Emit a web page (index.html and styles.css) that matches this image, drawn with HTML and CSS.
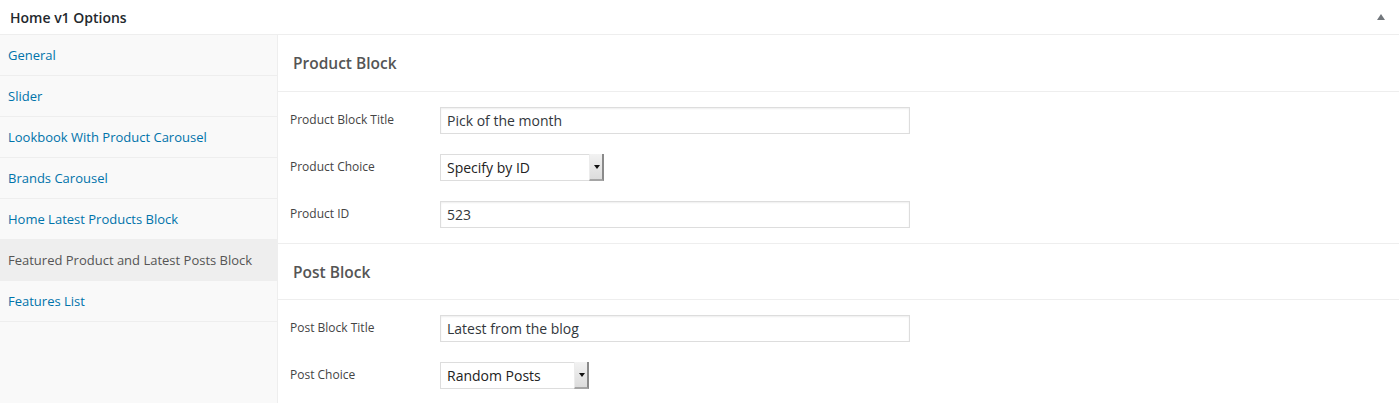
FILE: index.html
```html
<!DOCTYPE html>
<html>
<head>
<meta charset="utf-8">
<link rel="stylesheet" href="styles.css">
</head>
<body>
<div class="box">
  <div class="box-head">
    <h2 class="box-title">Home v1 Options</h2>
    <span class="toggle"></span>
  </div>
  <div class="box-body">
    <ul class="tabs">
      <li class="tab"><a href="#">General</a></li>
      <li class="tab"><a href="#">Slider</a></li>
      <li class="tab"><a href="#">Lookbook With Product Carousel</a></li>
      <li class="tab"><a href="#">Brands Carousel</a></li>
      <li class="tab"><a href="#">Home Latest Products Block</a></li>
      <li class="tab active"><a href="#">Featured Product and Latest Posts Block</a></li>
      <li class="tab"><a href="#">Features List</a></li>
    </ul>
    <div class="panel">
      <section class="group">
        <h3 class="group-title">Product Block</h3>
        <div class="fields">
          <div class="field">
            <label class="field-label">Product Block Title</label>
            <div class="input">Pick of the month</div>
          </div>
          <div class="field">
            <label class="field-label">Product Choice</label>
            <div class="select w-product">Specify by ID<span class="arrow"></span></div>
          </div>
          <div class="field">
            <label class="field-label">Product ID</label>
            <div class="input">523</div>
          </div>
        </div>
      </section>
      <section class="group">
        <h3 class="group-title second">Post Block</h3>
        <div class="fields">
          <div class="field">
            <label class="field-label">Post Block Title</label>
            <div class="input">Latest from the blog</div>
          </div>
          <div class="field">
            <label class="field-label">Post Choice</label>
            <div class="select w-post">Random Posts<span class="arrow"></span></div>
          </div>
        </div>
      </section>
    </div>
  </div>
</div>
</body>
</html>
```

FILE: styles.css
```css
* { box-sizing: border-box; }
html, body { margin: 0; padding: 0; background: #fff; }
body {
  font-family: "Open Sans", "Liberation Sans", sans-serif;
  color: #444;
  overflow: hidden;
  height: 403px;
}
.box { background: #fff; height: 403px; overflow: hidden; }
.box-head {
  height: 35px;
  border-bottom: 1px solid #eee;
  display: flex;
  align-items: center;
  justify-content: space-between;
  padding: 0 14px 0 10px;
}
.box-title {
  margin: 0;
  font-size: 14px;
  font-weight: 600;
  color: #23282d;
}
.toggle {
  width: 0; height: 0;
  border-left: 4px solid transparent;
  border-right: 4px solid transparent;
  border-bottom: 6px solid #72777c;
  margin-top: -1px;
}
.box-body { display: flex; height: 368px; }
.tabs {
  list-style: none;
  margin: 0;
  padding: 0;
  width: 278px;
  flex: none;
  background: #f9f9f9;
  border-right: 1px solid #eee;
}
.tab {
  height: 41px;
  border-bottom: 1px solid #eee;
  display: flex;
  align-items: center;
  padding-left: 8px;
}
.tab a {
  font-size: 13px;
  color: #0073aa;
  text-decoration: none;
}
.tab.active { background: #eee; }
.tab.active a { color: #555; }
.panel { flex: 1; }
.group { border-bottom: 1px solid #eee; }
.group-title {
  margin: 0;
  height: 57px;
  display: flex;
  align-items: center;
  padding-left: 15px;
  font-size: 15.5px;
  font-weight: 600;
  color: #555;
  border-bottom: 1px solid #eee;
}
.group-title.second { height: 56px; }
.fields {
  padding: 15px 0;
  display: flex;
  flex-direction: column;
  gap: 20px;
}
.field {
  display: flex;
  align-items: center;
  height: 27px;
}
.field-label {
  width: 162px;
  padding-left: 12px;
  font-size: 12px;
  color: #444;
  margin-top: -3px;
}
.input {
  width: 470px;
  height: 27px;
  border: 1px solid #ddd;
  box-shadow: inset 0 1px 2px rgba(0,0,0,0.07);
  font-size: 14px;
  color: #32373c;
  display: flex;
  align-items: center;
  padding-left: 6px;
}
.select {
  position: relative;
  height: 27px;
  border: 1px solid #ddd;
  font-size: 14px;
  color: #222;
  display: flex;
  align-items: center;
  padding-left: 6px;
  background: #fff;
}
.w-product { width: 164px; }
.w-post { width: 149px; }
.arrow {
  position: absolute;
  right: -1px;
  top: -1px;
  bottom: -1px;
  width: 15px;
  background: linear-gradient(#f2f2f2, #dcdcdc);
  border-right: 2px solid #8a8a8a;
  border-bottom: 2px solid #a5a5a5;
  border-left: 1px solid #ececec;
}
.arrow::after {
  content: "";
  position: absolute;
  left: 4px;
  top: 11px;
  border-left: 3px solid transparent;
  border-right: 3px solid transparent;
  border-top: 4px solid #111;
}
```
